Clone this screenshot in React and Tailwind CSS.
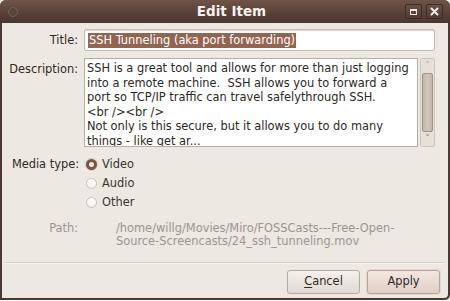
import React from 'react'

const Radio = ({ checked, label }) => (
    <div className="flex items-center h-[19px]">
        {checked ? (
            <span className="w-[11px] h-[11px] rounded-full border-[3px] border-[#7b5444] bg-[#f4efe9] shadow-[0_0_0_1px_#d8cfc6]" />
        ) : (
            <span className="w-[11px] h-[11px] rounded-full border border-[#c9c1b8] bg-gradient-to-b from-white to-[#f1ede8]" />
        )}
        <span className="ml-[5px] text-[#3a3530]">{label}</span>
    </div>
)

const lines = [
    'SSH is a great tool and allows for more than just logging',
    'into a remote machine.\u00a0 SSH allows you to forward a',
    'port so TCP/IP traffic can travel safelythrough SSH.',
    '<br /><br />',
    'Not only is this secure, but it allows you to do many',
    'things - like get ar...',
]

const App = () => {
    return (
        <div className="w-[450px] h-[301px] bg-white font-['DejaVu_Sans',sans-serif] text-[11.4px] overflow-hidden">
            <div className="w-[450px] h-[300px] flex flex-col rounded-t-[6px] rounded-br-[5px] overflow-hidden bg-[#4a3a33]">
                {/* title bar */}
                <div className="h-[23px] shrink-0 flex items-center px-[8px] bg-gradient-to-b from-[#6f5448] via-[#5b4339] to-[#4b362e]">
                    <span className="w-[10px] h-[10px] rounded-full border border-[#7a6157] bg-[#5c453c]" />
                    <div className="flex-1 text-center font-bold text-[13.5px] text-[#f6f2ee] ml-[40px]">Edit Item</div>
                    <div className="flex gap-[4px] mr-[-1px]">
                        <div className="w-[17px] h-[15px] rounded-[2px] border border-[#3d2d27] bg-gradient-to-b from-[#6a5047] to-[#4f3a32] flex items-center justify-center">
                            <span className="w-[7px] h-[6px] border-[1.5px] border-t-[2px] border-[#eee8e3]" />
                        </div>
                        <div className="w-[17px] h-[15px] rounded-[2px] border border-[#3d2d27] bg-gradient-to-b from-[#6a5047] to-[#4f3a32] flex items-center justify-center">
                            <svg width="9" height="9" viewBox="0 0 9 9"><path d="M1.5 1.5 L7.5 7.5 M7.5 1.5 L1.5 7.5" stroke="#f2ede9" strokeWidth="2" strokeLinecap="round" /></svg>
                        </div>
                    </div>
                </div>

                {/* body */}
                <div className="flex-1 mx-[2px] mb-[2px] bg-[#ede8e2] rounded-br-[4px] flex flex-col">
                    <div className="grid grid-cols-[76px_1fr] gap-x-[6px] pt-[6px] pr-[13px]">
                        <div className="text-right leading-[22px] text-[#2f2a26]">Title:</div>
                        <div className="h-[22px] border border-[#c7b9ad] rounded-[2px] bg-white flex items-center px-[3px] shadow-[inset_0_1px_1px_#e0d6cd]">
                            <span className="bg-[#95644f] text-white leading-[15px] px-[1px]">SSH Tunneling (aka port forwarding)</span>
                        </div>

                        <div className="text-right text-[#2f2a26] pt-[3px] mt-[7px]">Description:</div>
                        <div className="flex mt-[7px] h-[89px] gap-[2px]">
                            <div className="flex-1 border border-[#b9ada2] bg-white px-[2px] pt-[2px] leading-[14.6px] text-[#2c2824] overflow-hidden">
                                {lines.map((l) => (
                                    <div key={l} className="whitespace-pre">{l}</div>
                                ))}
                            </div>
                            <div className="w-[15px] border border-[#cfc5bb] rounded-[2px] bg-[#e6e0d9] flex flex-col items-center">
                                <div className="h-[14px] flex items-center justify-center text-[#a59a90] text-[8px]">˄</div>
                                <div className="flex-1 w-[11px] rounded-[2px] border border-[#9f9287] bg-gradient-to-r from-[#c2b6ab] via-[#d2c7bc] to-[#c2b6ab]" />
                                <div className="h-[14px] flex items-center justify-center text-[#6c6157] text-[8px]">˅</div>
                            </div>
                        </div>

                        <div className="text-right text-[#2f2a26] leading-[19px] mt-[8px] -mr-[1px]">Media type:</div>
                        <div className="mt-[8px] pl-[2px]">
                            <Radio checked label="Video" />
                            <Radio label="Audio" />
                            <Radio label="Other" />
                        </div>

                        <div className="text-right text-[#9c958e] leading-[13px] mt-[10px] pr-[0px]">Path:</div>
                        <div className="text-[#9c958e] leading-[13px] mt-[10px] pl-[32px]">
                            /home/willg/Movies/Miro/FOSSCasts---Free-Open-<br />
                            Source-Screencasts/24_ssh_tunneling.mov
                        </div>
                    </div>

                    <div className="mt-[14px] mx-[3px] border-t border-[#d6cec6] shadow-[0_1px_0_#f7f4f1]" />

                    <div className="flex justify-end gap-[7px] pr-[8px] pt-[7px]">
                        <button className="w-[73px] h-[24px] rounded-[3px] border border-[#b5aaa0] bg-gradient-to-b from-[#f5f1ed] to-[#e1d9d1] text-[#2f2a26]">
                            <span className="underline underline-offset-2">C</span>ancel
                        </button>
                        <button className="w-[73px] h-[24px] rounded-[3px] border border-[#b5a298] bg-gradient-to-b from-[#f3e8e1] to-[#e0cfc5] text-[#2f2a26] shadow-[0_0_0_1px_#e6d6cc]">
                            Apply
                        </button>
                    </div>
                </div>
            </div>
        </div>
    )
}

export default App
